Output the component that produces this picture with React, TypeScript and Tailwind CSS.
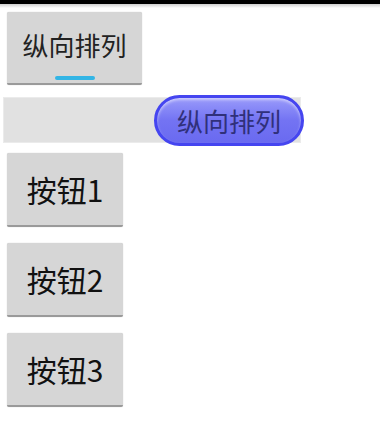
const cjk = { fontFamily: '"Noto Sans CJK SC", "Noto Sans", sans-serif' };

function GrayButton({ label }: { label: string }) {
  return (
    <button
      className="w-[116px] h-[74px] bg-[#d6d6d6] border-b-2 border-[#9a9a9a] rounded-[2px] text-[30px] text-[#111] flex items-center justify-center shadow-[0_0_1px_#bbb]"
      style={cjk}
    >
      {label}
    </button>
  );
}

export default function App() {
  return (
    <div className="w-[380px] h-[440px] bg-white overflow-hidden relative">
      <div className="h-[4px] bg-black" />
      <div className="h-[4px] bg-gradient-to-b from-[#cfcfcf] to-white" />

      <div className="pl-[7px] pt-[4px]">
        <button
          className="relative w-[135px] h-[73px] bg-[#d6d6d6] border-b-2 border-[#9a9a9a] rounded-[2px] text-[26px] text-[#222] flex items-center justify-center pb-[6px] shadow-[0_0_1px_#bbb]"
          style={cjk}
        >
          纵向排列
          <span className="absolute left-[48px] bottom-[3px] w-[40px] h-[4px] rounded-full bg-[#33b5e5]" />
        </button>
      </div>

      <div className="mt-[12px] ml-[3px] w-[298px] h-[46px] bg-[#e1e1e1] border border-[#ebebeb] flex items-center justify-end">
        <button
          className="-mr-[4px] w-[150px] h-[51px] rounded-full border-[3px] border-[#4545f0] bg-gradient-to-b from-[#9a9afa] via-[#7373f3] to-[#6a6af0] text-[26px] text-[#30307a] flex items-center justify-center shadow-[inset_0_2px_3px_rgba(255,255,255,0.5)]"
          style={cjk}
        >
          纵向排列
        </button>
      </div>

      <div className="pl-[7px] pt-[10px] flex flex-col gap-[16px]">
        <GrayButton label="按钮1" />
        <GrayButton label="按钮2" />
        <GrayButton label="按钮3" />
      </div>
    </div>
  );
}
